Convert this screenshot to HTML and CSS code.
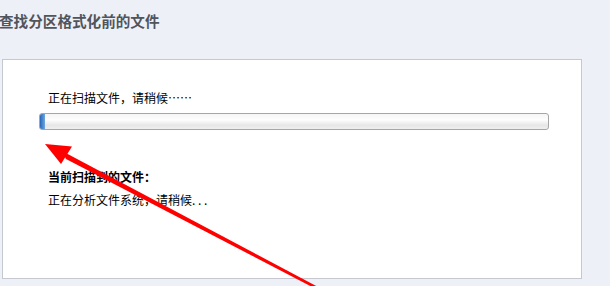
FILE: index.html
```html
<!DOCTYPE html>
<html>
<head>
<meta charset="utf-8"/>
<title>查找分区格式化前的文件</title>
<link rel="stylesheet" href="styles.css">
</head>
<body>
<div id="wrap">
	<h1 class="title">查找分区格式化前的文件</h1>
	<div class="panel">
		<p class="status">正在扫描文件，请稍候……</p>
		<div class="bar"><div class="bar_fill"></div></div>
		<p class="cur_label">当前扫描到的文件：</p>
		<p class="cur_file">正在分析文件系统，请稍候. . .</p>
	</div>
	<!-- 标注箭头 -->
	<svg class="arrow" width="610" height="286" viewBox="0 0 610 286">
		<polygon points="62,151 66,159 318,290 320,288" fill="#f00"/>
		<polygon points="45,144 72,146.5 61,164" fill="#f00"/>
	</svg>
</div>
</body>
</html>
```

FILE: styles.css
```css
body,h1,p{margin:0;padding:0;}
body{background:#eef0f8;font-family:"Noto Sans CJK SC","Liberation Sans",sans-serif;font-size:12px;color:#000;overflow:hidden;}
#wrap{position:relative;width:610px;height:286px;}
.title{height:59px;line-height:42px;font-size:14.6px;font-weight:bold;color:#50555c;margin-left:-1px;}
.panel{margin-left:2px;width:578px;height:218px;background:#fff;border:1px solid #c6c8d0;padding:0;}
.status{margin:30px 0 0 45px;line-height:16px;}
.bar{margin:7px 0 0 36px;width:508px;height:15px;border:1px solid #a4a6a8;border-radius:3px;background:linear-gradient(#f6f6f6,#fdfdfd 40%,#e6e6e6 75%,#efefef);overflow:hidden;}
.bar_fill{width:5px;height:100%;background:linear-gradient(90deg,#2a66b8,#6fa6e0);}
.cur_label{margin:35px 0 0 45px;line-height:23px;font-weight:bold;}
.cur_file{margin-left:45px;line-height:23px;}
.arrow{position:absolute;left:0;top:0;}
```
